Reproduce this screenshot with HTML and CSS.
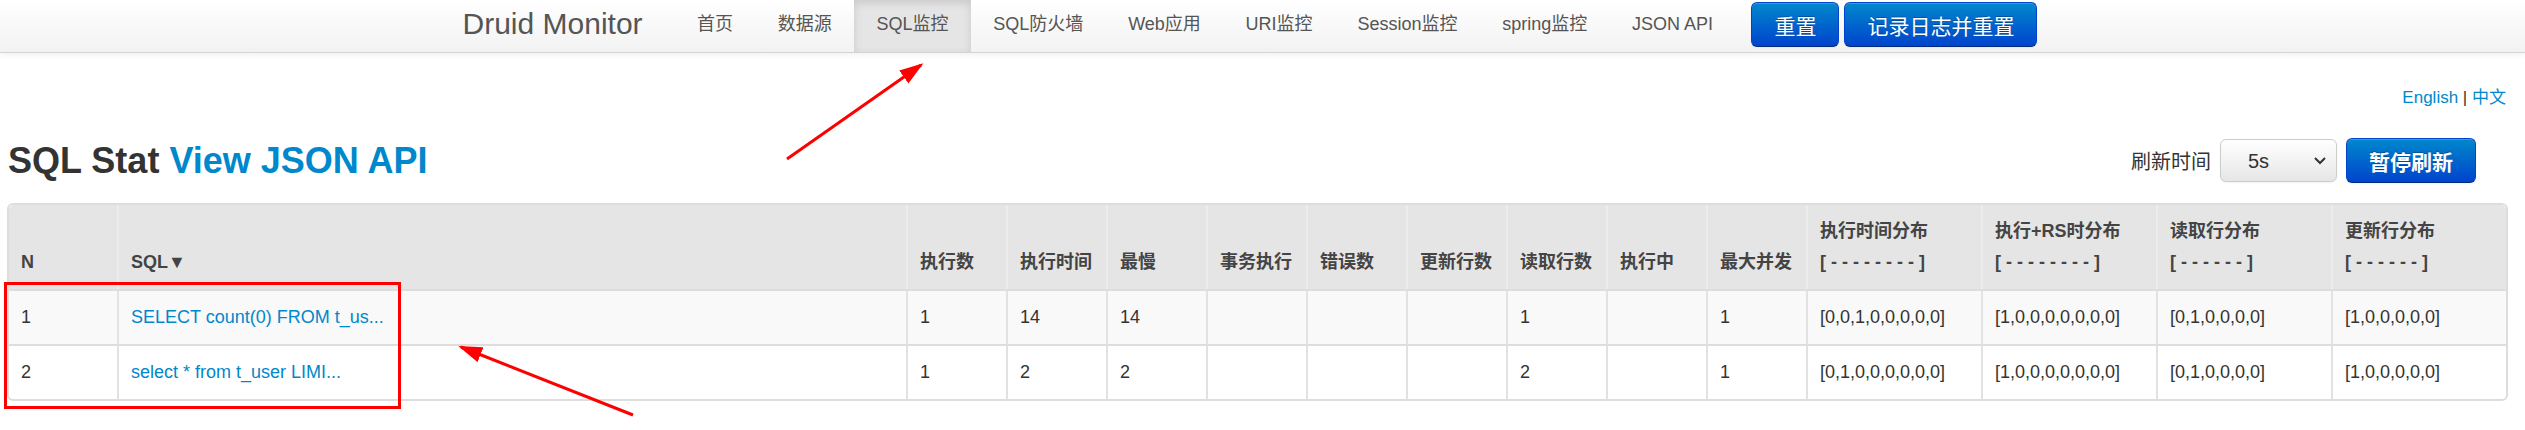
FILE: index.html
```html
<!DOCTYPE html>
<html lang="zh-CN">
<head>
  <meta charset="UTF-8" />
  <title>Druid Stat Index</title>
  <link rel="stylesheet" href="styles.css">
</head>

<body>
  <!-- Navbar -->
  <div class="navbar">
    <div class="nav-wrap">
      <a class="brand" href="#">Druid Monitor</a>
      <ul class="nav">
        <li><a href="#">首页</a></li>
        <li><a href="#">数据源</a></li>
        <li class="active"><a href="#">SQL监控</a></li>
        <li><a href="#">SQL防火墙</a></li>
        <li><a href="#">Web应用</a></li>
        <li><a href="#">URI监控</a></li>
        <li><a href="#">Session监控</a></li>
        <li><a href="#">spring监控</a></li>
        <li><a href="#">JSON API</a></li>
      </ul>
      <div class="nav-btns">
        <button class="btn btn-primary">重置</button>
        <button class="btn btn-primary">记录日志并重置</button>
      </div>
    </div>
  </div>

  <!-- Content -->
  <div class="content">
    <div class="lang"><a href="#">English</a> | <a href="#">中文</a></div>

    <div class="title-row">
      <h1>SQL Stat <a href="#">View JSON API</a></h1>
      <div class="refresh">
        <span class="refresh-label">刷新时间</span>
        <span class="select-wrap">
          <select>
            <option>5s</option>
            <option>10s</option>
            <option>20s</option>
            <option>30s</option>
          </select>
          <svg class="chevron" width="12" height="8" viewBox="0 0 12 8"><polyline points="1,1 6,6 11,1" fill="none" stroke="#333" stroke-width="2"/></svg>
        </span>
        <button class="btn btn-primary btn-bold">暂停刷新</button>
      </div>
    </div>

    <table class="stat-table">
      <colgroup>
        <col style="width: 108px">
        <col>
        <col style="width: 100px"><col style="width: 100px"><col style="width: 100px">
        <col style="width: 100px"><col style="width: 100px"><col style="width: 100px">
        <col style="width: 100px"><col style="width: 100px"><col style="width: 100px">
        <col style="width: 175px"><col style="width: 175px"><col style="width: 175px"><col style="width: 175px">
      </colgroup>
      <thead>
        <tr>
          <th>N</th>
          <th>SQL▼</th>
          <th>执行数</th>
          <th>执行时间</th>
          <th>最慢</th>
          <th>事务执行</th>
          <th>错误数</th>
          <th>更新行数</th>
          <th>读取行数</th>
          <th>执行中</th>
          <th>最大并发</th>
          <th>执行时间分布<br>[ - - - - - - - - ]</th>
          <th>执行+RS时分布<br>[ - - - - - - - - ]</th>
          <th>读取行分布<br>[ - - - - - - ]</th>
          <th>更新行分布<br>[ - - - - - - ]</th>
        </tr>
      </thead>
      <tbody>
        <tr>
          <td>1</td>
          <td><a href="#">SELECT count(0) FROM t_us...</a></td>
          <td>1</td>
          <td>14</td>
          <td>14</td>
          <td></td>
          <td></td>
          <td></td>
          <td>1</td>
          <td></td>
          <td>1</td>
          <td>[0,0,1,0,0,0,0,0]</td>
          <td>[1,0,0,0,0,0,0,0]</td>
          <td>[0,1,0,0,0,0]</td>
          <td>[1,0,0,0,0,0]</td>
        </tr>
        <tr>
          <td>2</td>
          <td><a href="#">select * from t_user LIMI...</a></td>
          <td>1</td>
          <td>2</td>
          <td>2</td>
          <td></td>
          <td></td>
          <td></td>
          <td>2</td>
          <td></td>
          <td>1</td>
          <td>[0,1,0,0,0,0,0,0]</td>
          <td>[1,0,0,0,0,0,0,0]</td>
          <td>[0,1,0,0,0,0]</td>
          <td>[1,0,0,0,0,0]</td>
        </tr>
      </tbody>
    </table>
  </div>

  <!-- Annotations drawn over the screenshot -->
  <svg class="marks" width="2525" height="430" viewBox="0 0 2525 430">
    <defs>
      <marker id="head" markerWidth="24" markerHeight="16" refX="21" refY="8" orient="auto" markerUnits="userSpaceOnUse">
        <path d="M0,0 L24,8 L0,16 z" fill="#ff0000"/>
      </marker>
    </defs>
    <line x1="787" y1="159" x2="921" y2="65" stroke="#ff0000" stroke-width="3" marker-end="url(#head)"/>
    <rect x="5.5" y="283.5" width="394" height="124" fill="none" stroke="#ff0000" stroke-width="3"/>
    <line x1="633" y1="415" x2="461" y2="347" stroke="#ff0000" stroke-width="3" marker-end="url(#head)"/>
  </svg>
</body>
</html>
```

FILE: styles.css
```css
body {
  font-family: "Liberation Sans", Arial, "Noto Sans CJK SC", sans-serif;
  margin: 0;
  color: #333;
  background-color: white;
  position: relative;
  width: 2525px;
  height: 430px;
  overflow: hidden;
}

a {
  color: #0088cc;
  text-decoration: none;
}

/* Navbar */
.navbar {
  height: 52px;
  background: linear-gradient(to bottom, #ffffff, #f2f2f2);
  border-bottom: 1px solid #d4d4d4;
  box-shadow: 0 2px 6px rgba(0,0,0,0.06);
}

.nav-wrap {
  width: 1600px;
  margin: 0 auto;
  height: 52px;
  display: flex;
  align-items: center;
}

.brand {
  font-size: 30px;
  color: #555;
  margin-right: 32px;
  line-height: 44px;
  margin-top: -4px;
}

.nav {
  list-style: none;
  margin: 0;
  padding: 0;
  display: flex;
  height: 52px;
}

.nav a {
  display: block;
  padding: 0 22.4px;
  line-height: 48px;
  font-size: 18px;
  color: #555;
}

.nav li.active a {
  background-color: #e5e5e5;
  box-shadow: inset 0 3px 8px rgba(0,0,0,0.125);
  height: 52px;
}

.nav-btns {
  display: flex;
  gap: 5px;
  margin-left: 16px;
  margin-top: -3px;
}

.btn {
  font-family: "Liberation Sans", Arial, "Noto Sans CJK SC", sans-serif;
  font-size: 21px;
  height: 45px;
  padding: 0 22px;
  border-radius: 6px;
  cursor: pointer;
}

.btn-primary {
  color: white;
  background: linear-gradient(to bottom, #0088cc, #0044cc);
  border: 1px solid #0044cc;
  border-bottom-color: #002a80;
  text-shadow: 0 -1px 0 rgba(0,0,0,0.25);
  box-shadow: inset 0 1px 0 rgba(255,255,255,0.2), 0 1px 2px rgba(0,0,0,0.05);
}

.btn-bold {
  font-weight: bold;
}

/* Content */
.content {
  padding: 0 17px 0 7px;
}

.lang {
  text-align: right;
  font-size: 17px;
  line-height: 20px;
  margin-top: 35px;
  padding-right: 2px;
  color: #333;
}

.title-row {
  display: flex;
  justify-content: space-between;
  align-items: center;
  margin-top: 30px;
  height: 45px;
}

h1 {
  margin: 0 0 0 1px;
  font-size: 36px;
  line-height: 45px;
  color: #333;
}

.refresh {
  display: flex;
  align-items: center;
  margin-right: 32px;
}

.refresh-label {
  font-size: 20px;
  margin-right: 9px;
}

.select-wrap {
  position: relative;
  margin-right: 9px;
}

.select-wrap select {
  appearance: none;
  -webkit-appearance: none;
  width: 117px;
  height: 43px;
  padding: 0 0 0 27px;
  font-family: "Liberation Sans", Arial, sans-serif;
  font-size: 20px;
  color: #333;
  border: 1px solid #ccc;
  border-radius: 6px;
  background: linear-gradient(to bottom, #ffffff, #e6e6e6);
  box-shadow: inset 0 1px 0 rgba(255,255,255,0.2), 0 1px 2px rgba(0,0,0,0.05);
  display: block;
}

.chevron {
  position: absolute;
  right: 11px;
  top: 18px;
  pointer-events: none;
}

/* Stat table */
.stat-table {
  width: 100%;
  table-layout: fixed;
  border-collapse: separate;
  border-spacing: 0;
  border: 2px solid #ddd;
  border-radius: 6px;
  margin-top: 20px;
  font-size: 18px;
}

.stat-table th, .stat-table td {
  padding: 11px 12px;
  line-height: 31px;
  text-align: left;
  border-left: 2px solid #e2e2e2;
  white-space: nowrap;
  overflow: hidden;
}

.stat-table th:first-child, .stat-table td:first-child {
  border-left: none;
}

.stat-table th {
  background-color: #e5e5e5;
  color: #444;
  font-weight: bold;
  vertical-align: bottom;
  border-left-color: #ececec;
}

.stat-table thead tr th:first-child {
  border-top-left-radius: 5px;
}

.stat-table thead tr th:last-child {
  border-top-right-radius: 5px;
}

.stat-table td {
  border-top: 2px solid #ddd;
  vertical-align: middle;
}

.stat-table tbody tr:nth-child(odd) td {
  background-color: #f9f9f9;
}

/* Annotations */
.marks {
  position: absolute;
  top: 0;
  left: 0;
  pointer-events: none;
}
```
